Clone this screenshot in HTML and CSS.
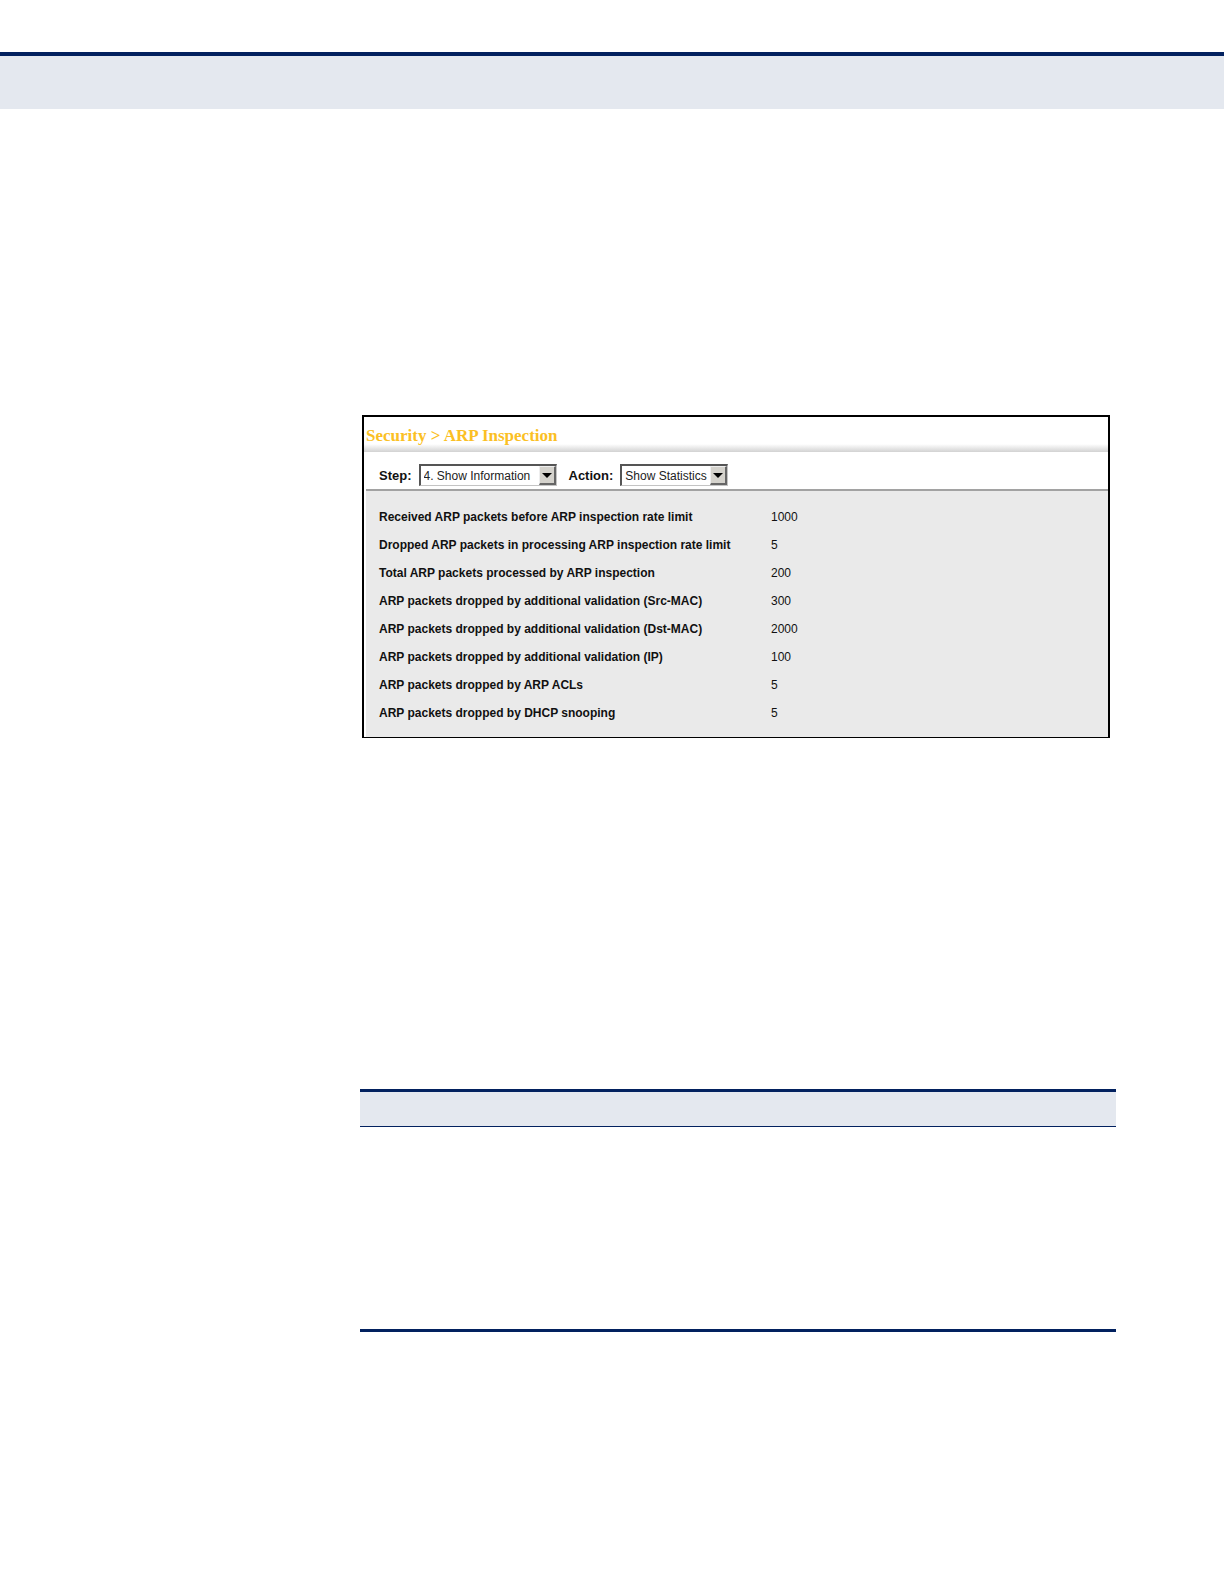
FILE: index.html
```html
<!DOCTYPE html>
<html lang="en">
<head>
<meta charset="UTF-8" />
<meta name="viewport" content="width=device-width, initial-scale=1" />
<title>ARP Inspection</title>
<link rel="stylesheet" href="styles.css">
</head>
<body>

<header class="page-header"></header>

<main>
  <section class="panel">
    <h1>Security &gt; ARP Inspection</h1>

    <form class="toolbar">
      <label for="step">Step:</label>
      <div class="dropdown step">
        <select id="step">
          <option>4. Show Information</option>
        </select>
        <span class="arrow"><svg width="10" height="5" viewBox="0 0 10 5"><path d="M0 0h10L5 5z"/></svg></span>
      </div>
      <label for="action">Action:</label>
      <div class="dropdown action">
        <select id="action">
          <option>Show Statistics</option>
        </select>
        <span class="arrow"><svg width="10" height="5" viewBox="0 0 10 5"><path d="M0 0h10L5 5z"/></svg></span>
      </div>
    </form>

    <div class="content">
      <table class="stats">
        <tr><th scope="row">Received ARP packets before ARP inspection rate limit</th><td>1000</td></tr>
        <tr><th scope="row">Dropped ARP packets in processing ARP inspection rate limit</th><td>5</td></tr>
        <tr><th scope="row">Total ARP packets processed by ARP inspection</th><td>200</td></tr>
        <tr><th scope="row">ARP packets dropped by additional validation (Src-MAC)</th><td>300</td></tr>
        <tr><th scope="row">ARP packets dropped by additional validation (Dst-MAC)</th><td>2000</td></tr>
        <tr><th scope="row">ARP packets dropped by additional validation (IP)</th><td>100</td></tr>
        <tr><th scope="row">ARP packets dropped by ARP ACLs</th><td>5</td></tr>
        <tr><th scope="row">ARP packets dropped by DHCP snooping</th><td>5</td></tr>
      </table>
    </div>
  </section>

  <section class="log">
    <div class="log-head"></div>
    <div class="log-body"></div>
  </section>
</main>

</body>
</html>
```
FILE: styles.css
```css
* {
  box-sizing: border-box;
  margin: 0;
  padding: 0;
}

body {
  background: #fff;
  color: #111;
  font-family: "Liberation Sans", Arial, sans-serif;
  font-size: 12px;
  padding-top: 52px;
}

.page-header {
  height: 57px;
  background: #e4e8ef;
  border-top: 4px solid #02215f;
}

main {
  padding: 306px 108px 0 360px;
}

/* framed settings panel */
.panel {
  margin: 0 6px 0 2px;
  border: 2px solid #000;
  border-bottom-width: 1px;
}

.panel h1 {
  height: 35px;
  padding-left: 2px;
  font-family: "Liberation Serif", "Times New Roman", serif;
  font-size: 17px;
  line-height: 38px;
  color: #fbbf24;
  background: linear-gradient(#fff, #d2d2d2) bottom / 100% 8px no-repeat;
}

.toolbar {
  display: flex;
  align-items: center;
  margin-left: 2px;
  padding: 12px 13px 3px;
  border-bottom: 2px solid #a2a2a2;
}

.toolbar label {
  font-size: 13px;
  font-weight: bold;
}

.dropdown {
  position: relative;
  height: 22px;
  margin: 0 12px 0 7px;
  background: #fff;
  border: 1px solid #c4c4c4;
  border-top: 2px solid #555;
  border-left: 2px solid #555;
}

.step {
  width: 138px;
}

.action {
  width: 108px;
}

.dropdown select {
  width: 100%;
  height: 100%;
  padding-left: 3px;
  border: none;
  background: none;
  color: #222;
  font: inherit;
  appearance: none;
}

/* raised button over the right end of the select */
.arrow {
  position: absolute;
  top: 0;
  right: 0;
  bottom: 0;
  width: 17px;
  display: flex;
  align-items: center;
  justify-content: center;
  background: #d4d2cc;
  border: 1px solid #eee;
  border-right: 2px solid #666;
  border-bottom: 2px solid #666;
  pointer-events: none;
}

.content {
  margin-left: 2px;
  padding: 12px 13px 10px;
  background: #eaeaea;
}

.stats {
  width: 100%;
  border-collapse: collapse;
}

.stats th,
.stats td {
  height: 28px;
  text-align: left;
}

.stats th {
  width: 392px;
}

/* empty log message table */
.log {
  margin-top: 351px;
  border-top: 3px solid #02215f;
  border-bottom: 3px solid #02215f;
}

.log-head {
  height: 35px;
  background: #e4e8ef;
  border-bottom: 1px solid #02215f;
}

.log-body {
  height: 202px;
}
```
